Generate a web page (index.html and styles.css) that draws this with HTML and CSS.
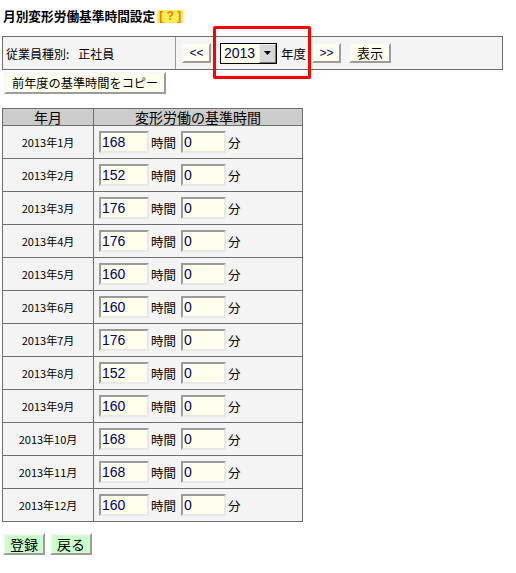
FILE: index.html
```html
<!DOCTYPE html>
<html lang="ja">
<head>
<meta charset="utf-8">
<title>月別変形労働基準時間設定</title>
<link rel="stylesheet" href="styles.css">
</head>
<body>
<div class="page">
  <h1 class="title">月別変形労働基準時間設定<span class="help">[ ? ]</span></h1>

  <div class="filter">
    <div class="filter-label"><span class="key">従業員種別:</span><span>正社員</span></div>
    <div class="filter-controls">
      <button class="btn nav">&lt;&lt;</button>
      <div class="select"><span class="select-val">2013</span><span class="select-arrow"><svg width="9" height="5" viewBox="0 0 9 5"><path d="M1 0h7L4.5 4z" fill="#000"/></svg></span></div>
      <span class="unit">年度</span>
      <button class="btn nav">&gt;&gt;</button>
      <button class="btn show">表示</button>
      <div class="highlight"></div>
    </div>
  </div>

  <button class="btn copy">前年度の基準時間をコピー</button>

  <table class="grid">
    <thead>
      <tr><th class="c-month">年月</th><th>変形労働の基準時間</th></tr>
    </thead>
    <tbody>
      <tr><td class="c-month">2013年1月</td><td><span class="inp h">168</span><span class="lbl">時間</span><span class="inp m">0</span><span class="lbl">分</span></td></tr>
      <tr><td class="c-month">2013年2月</td><td><span class="inp h">152</span><span class="lbl">時間</span><span class="inp m">0</span><span class="lbl">分</span></td></tr>
      <tr><td class="c-month">2013年3月</td><td><span class="inp h">176</span><span class="lbl">時間</span><span class="inp m">0</span><span class="lbl">分</span></td></tr>
      <tr><td class="c-month">2013年4月</td><td><span class="inp h">176</span><span class="lbl">時間</span><span class="inp m">0</span><span class="lbl">分</span></td></tr>
      <tr><td class="c-month">2013年5月</td><td><span class="inp h">160</span><span class="lbl">時間</span><span class="inp m">0</span><span class="lbl">分</span></td></tr>
      <tr><td class="c-month">2013年6月</td><td><span class="inp h">160</span><span class="lbl">時間</span><span class="inp m">0</span><span class="lbl">分</span></td></tr>
      <tr><td class="c-month">2013年7月</td><td><span class="inp h">176</span><span class="lbl">時間</span><span class="inp m">0</span><span class="lbl">分</span></td></tr>
      <tr><td class="c-month">2013年8月</td><td><span class="inp h">152</span><span class="lbl">時間</span><span class="inp m">0</span><span class="lbl">分</span></td></tr>
      <tr><td class="c-month">2013年9月</td><td><span class="inp h">160</span><span class="lbl">時間</span><span class="inp m">0</span><span class="lbl">分</span></td></tr>
      <tr><td class="c-month">2013年10月</td><td><span class="inp h">168</span><span class="lbl">時間</span><span class="inp m">0</span><span class="lbl">分</span></td></tr>
      <tr><td class="c-month">2013年11月</td><td><span class="inp h">168</span><span class="lbl">時間</span><span class="inp m">0</span><span class="lbl">分</span></td></tr>
      <tr><td class="c-month">2013年12月</td><td><span class="inp h">160</span><span class="lbl">時間</span><span class="inp m">0</span><span class="lbl">分</span></td></tr>
    </tbody>
  </table>

  <div class="actions">
    <button class="btn green">登録</button>
    <button class="btn green">戻る</button>
  </div>
</div>
</body>
</html>
```
FILE: styles.css
```css
html, body {
  margin: 0;
  padding: 0;
  background: #fff;
}
body {
  font-family: "Noto Sans CJK JP", "Noto Sans", sans-serif;
  font-size: 13px;
  color: #000;
}
.page {
  padding: 8px 0 0 2px;
}
.title {
  margin: 0 0 0 1px;
  font-size: 12.7px;
  font-weight: bold;
  line-height: 16px;
  height: 28px;
  display: flex;
  align-items: flex-start;
}
.help {
  display: inline-block;
  margin-left: 2px;
  margin-top: 2px;
  background: #ffee55;
  color: #ff7700;
  font-family: "Liberation Sans", sans-serif;
  font-size: 12px;
  font-weight: bold;
  line-height: 13px;
  padding: 0 2px;
  white-space: pre;
}
.filter {
  width: 499px;
  height: 32px;
  border: 1px solid #6e6e6e;
  background: #f4f4f4;
  display: flex;
}
.filter-label {
  width: 169px;
  border-right: 1px solid #9a9a9a;
  display: flex;
  align-items: center;
  padding-left: 3px;
  font-size: 12px;
}
.key {
  margin-right: 9px;
}
.filter-controls {
  position: relative;
  display: flex;
  align-items: center;
  padding-left: 6px;
}
.btn {
  font-family: "Noto Sans CJK JP", "Noto Sans", sans-serif;
  font-size: 13px;
  line-height: 16px;
  background: #ffffee;
  color: #000;
  border: 2px solid;
  border-color: #f8f8f8 #9c9c9c #9c9c9c #f8f8f8;
  padding: 0 6px;
  height: 20px;
  margin: 0;
  cursor: pointer;
}
.nav {
  color: #000080;
  font-family: "Liberation Sans", sans-serif;
  font-size: 12px;
  width: 29px;
  padding: 0;
}
.select {
  margin-left: 9px;
  width: 55px;
  height: 19px;
  border: 1px solid #000;
  background: #ffffee;
  display: flex;
  align-items: stretch;
}
.select-val {
  flex: 1;
  font-family: "Liberation Sans", sans-serif;
  font-size: 14px;
  line-height: 19px;
  color: #000050;
  padding-left: 3px;
}
.select-arrow {
  width: 15px;
  background: #d8d8d8;
  border: 1px solid;
  border-color: #f0f0f0 #777 #777 #f0f0f0;
  display: flex;
  align-items: center;
  justify-content: center;
}
.unit {
  margin-left: 4px;
  margin-right: 6px;
  font-size: 12.5px;
}
.show {
  margin-left: 8px;
  width: 42px;
  padding: 0;
}
.highlight {
  position: absolute;
  left: 37px;
  top: -11px;
  width: 92px;
  height: 47px;
  border: 3px solid #ff0000;
  border-radius: 2px;
}
.copy {
  margin: 2px 0 0 2px;
  height: 22px;
  padding: 0 6px;
  font-size: 12.2px;
}
.grid {
  margin-top: 14px;
  border-collapse: collapse;
  width: 301px;
  border: 1px solid #6e6e6e;
}
.grid th {
  background: #cccccc;
  font-weight: normal;
  font-size: 14px;
  line-height: 15px;
  height: 16px;
  padding: 0;
  border: 1px solid #6e6e6e;
}
.grid td {
  background: #f4f4f4;
  border: 1px solid #6e6e6e;
  height: 32px;
  padding: 0 0 0 5px;
  white-space: nowrap;
  font-size: 12px;
}
.grid td.c-month {
  text-align: center;
  padding: 0;
  font-size: 11px;
}
.c-month { width: 90px; }
.inp {
  display: inline-block;
  vertical-align: middle;
  box-sizing: border-box;
  height: 22px;
  border: 2px solid;
  border-color: #9a9a9a #e8e8e8 #e8e8e8 #9a9a9a;
  background: #ffffee;
  font-family: "Liberation Sans", sans-serif;
  font-size: 14px;
  line-height: 18px;
  color: #000066;
  padding-left: 1px;
}
.inp.h { width: 50px; }
.inp.m { width: 45px; }
.lbl {
  display: inline-block;
  vertical-align: middle;
  font-size: 12.5px;
  margin: 0 5px 0 2px;
}
.actions {
  margin-top: 11px;
  display: flex;
  gap: 5px;
  padding-left: 1px;
}
.green {
  background: #ccffcc;
  height: 22px;
  padding: 0 5px;
  font-size: 14px;
}
```
